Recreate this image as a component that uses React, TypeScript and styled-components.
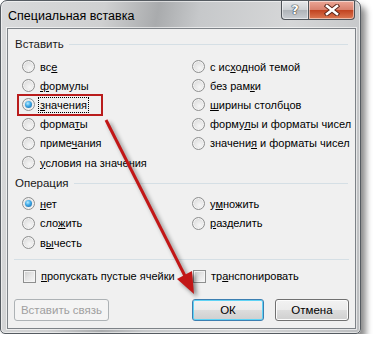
import styled, { createGlobalStyle } from 'styled-components';

const GlobalStyle = createGlobalStyle`
  html, body {
    margin: 0;
    padding: 0;
    background: #ffffff;
  }
  body {
    font-family: "Liberation Sans", Arial, sans-serif;
    font-size: 11px;
    color: #000;
  }
`;

type Option = { label: React.ReactNode; checked?: boolean; marked?: boolean };

const pasteLeft: Option[] = [
  { label: <>вс<u>е</u></> },
  { label: <><u>ф</u>ормулы</> },
  { label: <><u>з</u>начения</>, checked: true, marked: true },
  { label: <>форма<u>т</u>ы</> },
  { label: <>приме<u>ч</u>ания</> },
  { label: <><u>у</u>словия на значения</> },
];

const pasteRight: Option[] = [
  { label: <>с ис<u>х</u>одной темой</> },
  { label: <>без рам<u>к</u>и</> },
  { label: <><u>ш</u>ирины столбцов</> },
  { label: <>форму<u>л</u>ы и форматы чисел</> },
  { label: <>значени<u>я</u> и форматы чисел</> },
];

const opLeft: Option[] = [
  { label: <><u>н</u>ет</>, checked: true },
  { label: <>сло<u>ж</u>ить</> },
  { label: <>в<u>ы</u>честь</> },
];

const opRight: Option[] = [
  { label: <>у<u>м</u>ножить</> },
  { label: <><u>р</u>азделить</> },
];

const RadioColumn = ({ items, rowHeight }: { items: Option[]; rowHeight: number }) => (
  <Column>
    {items.map((item, i) => (
      <Item key={i} style={{ height: rowHeight }}>
        <Radio $checked={!!item.checked} />
        <Label $focused={!!item.marked}>{item.label}</Label>
        {item.marked && <Highlight />}
      </Item>
    ))}
  </Column>
);

const App = () => {
  return (
    <>
      <GlobalStyle />
      <Window>
        <TitleBar>
          <Title>Специальная вставка</Title>
          <Controls>
            <HelpButton>?</HelpButton>
            <CloseButton>
              <svg width="16" height="12" viewBox="0 0 16 12">
                <path
                  d="M3 2 L13 10 M13 2 L3 10"
                  stroke="#5a2418"
                  strokeWidth="4.4"
                  strokeLinecap="square"
                />
                <path
                  d="M3 2 L13 10 M13 2 L3 10"
                  stroke="#ffffff"
                  strokeWidth="2.6"
                  strokeLinecap="square"
                />
              </svg>
            </CloseButton>
          </Controls>
        </TitleBar>

        <Client>
          <GroupHeader>Вставить</GroupHeader>
          <OptionGrid $top={5}>
            <RadioColumn items={pasteLeft} rowHeight={19.2} />
            <RadioColumn items={pasteRight} rowHeight={19.2} />
          </OptionGrid>

          <GroupHeader $top={3}>Операция</GroupHeader>
          <OptionGrid $top={3}>
            <RadioColumn items={opLeft} rowHeight={19.5} />
            <RadioColumn items={opRight} rowHeight={19.5} />
          </OptionGrid>

          <Separator />

          <OptionGrid $top={7}>
            <Item style={{ height: 19 }}>
              <Checkbox />
              <CheckLabel><u>п</u>ропускать пустые ячейки</CheckLabel>
            </Item>
            <Item style={{ height: 19 }}>
              <Checkbox />
              <CheckLabel>тр<u>а</u>нспонировать</CheckLabel>
            </Item>
          </OptionGrid>

          <ButtonRow>
            <Button $disabled $width={95}>Вставить связь</Button>
            <Spacer />
            <Button $default $width={72}>ОК</Button>
            <Button $width={74}>Отмена</Button>
          </ButtonRow>
        </Client>

        <Arrow width="361" height="334" viewBox="0 0 361 334">
          <line x1="106" y1="120" x2="186" y2="278" stroke="#c21717" strokeWidth="3" />
          <polygon points="177,279 192,271 194,294" fill="#c21717" />
        </Arrow>
      </Window>
    </>
  );
};

export default App;

const Window = styled.div`
  position: relative;
  box-sizing: border-box;
  width: 361px;
  height: 334px;
  display: flex;
  flex-direction: column;
  padding: 0 4px 4px 6px;
  border: 1px solid #555b61;
  border-radius: 7px 7px 5px 5px;
  background: linear-gradient(
    100deg,
    #d9dadb 0%,
    #cfd0d1 25%,
    #a9abad 38%,
    #c6c8ca 48%,
    #d6d7d8 70%,
    #bcbec0 100%
  );
  box-shadow: 5px 6px 6px rgba(0, 0, 0, 0.45), inset 0 0 0 1px rgba(255, 255, 255, 0.55);
`;

const TitleBar = styled.div`
  display: flex;
  align-items: flex-start;
  height: 27px;
  flex-shrink: 0;
`;

const Title = styled.div`
  padding: 8px 0 0 1px;
  font-size: 12.5px;
  color: #000;
  white-space: nowrap;
`;

const Controls = styled.div`
  display: flex;
  margin-left: auto;
  margin-right: 1px;
`;

const CaptionButton = styled.div`
  height: 18px;
  display: flex;
  align-items: center;
  justify-content: center;
  border: 1px solid #4f545a;
  border-top: none;
  box-shadow: inset 0 0 0 1px rgba(255, 255, 255, 0.5);
`;

const HelpButton = styled(CaptionButton)`
  width: 26px;
  border-radius: 0 0 0 4px;
  border-right: none;
  background: linear-gradient(#e6e8ea 0%, #ccd0d4 50%, #aeb3b8 51%, #c9cdd2 100%);
  font-family: "DejaVu Sans", sans-serif;
  font-weight: bold;
  font-size: 13px;
  line-height: 18px;
  color: #ffffff;
  text-shadow: 0 0 1px #333, 0 0 1px #333, 0 0 1px #333;
`;

const CloseButton = styled(CaptionButton)`
  width: 45px;
  border-radius: 0 0 4px 0;
  background: linear-gradient(#eba696 0%, #d8806c 50%, #c1421f 51%, #dc7852 100%);
`;

const Client = styled.div`
  flex: 1;
  display: flex;
  flex-direction: column;
  padding: 0 7px;
  background: #f0f0f0;
  border: 1px solid #7d8287;
  box-shadow: 0 0 0 1px rgba(255, 255, 255, 0.6);
`;

const GroupHeader = styled.div<{ $top?: number }>`
  display: flex;
  align-items: center;
  height: 16px;
  margin-top: ${(p) => p.$top ?? 7}px;
  font-size: 11.5px;
  color: #1a1a1a;
  white-space: nowrap;

  &::after {
    content: '';
    flex: 1;
    height: 1px;
    margin-left: 5px;
    background: #d5dfe5;
  }
`;

const OptionGrid = styled.div<{ $top: number }>`
  display: grid;
  grid-template-columns: 170px 1fr;
  padding-left: 7px;
  margin-top: ${(p) => p.$top}px;
`;

const Column = styled.div`
  display: flex;
  flex-direction: column;
`;

const Item = styled.div`
  position: relative;
  display: flex;
  align-items: center;
  gap: 4px;
  white-space: nowrap;
`;

const Radio = styled.span<{ $checked: boolean }>`
  position: relative;
  box-sizing: border-box;
  width: 13px;
  height: 13px;
  flex-shrink: 0;
  border-radius: 50%;
  border: 1px solid #8e8f8f;
  background: radial-gradient(circle at 60% 65%, #f6f6f6 0%, #e3e3e3 55%, #d2d2d2 100%);
  box-shadow: inset 0 0 0 1px #f4f4f4;

  &::after {
    content: '';
    display: ${(p) => (p.$checked ? 'block' : 'none')};
    position: absolute;
    left: 2px;
    top: 2px;
    width: 7px;
    height: 7px;
    border-radius: 50%;
    background: radial-gradient(circle at 40% 35%, #b6ecff 0%, #3aa6e6 45%, #1b5d98 100%);
  }
`;

const Label = styled.span<{ $focused: boolean }>`
  padding: 0 1px;
  line-height: 14px;
  outline: ${(p) => (p.$focused ? '1px dotted #000' : 'none')};
`;

const Highlight = styled.span`
  position: absolute;
  left: -5px;
  top: -1px;
  width: 86px;
  height: 22px;
  box-sizing: border-box;
  border: 2px solid #b91c1c;
  pointer-events: none;
`;

const Separator = styled.div`
  height: 1px;
  margin: 6px -1px 0;
  background: #d5dfe5;
`;

const Checkbox = styled.span`
  box-sizing: border-box;
  width: 13px;
  height: 13px;
  flex-shrink: 0;
  margin-left: 1px;
  border: 1px solid #8e8f8f;
  background: linear-gradient(135deg, #cbcbcb 0%, #e6e6e6 50%, #f7f7f7 100%);
  box-shadow: inset 0 0 0 1px #f4f4f4;
`;

const CheckLabel = styled.span`
  margin-left: 1px;
`;

const ButtonRow = styled.div`
  display: flex;
  gap: 11px;
  margin: 13px -1px 0;
`;

const Spacer = styled.div`
  flex: 1;
`;

const Button = styled.div<{ $width: number; $default?: boolean; $disabled?: boolean }>`
  box-sizing: border-box;
  width: ${(p) => p.$width}px;
  height: 22px;
  display: flex;
  align-items: center;
  justify-content: center;
  border-radius: 3px;
  border: 1px solid ${(p) => (p.$disabled ? '#adb2b5' : p.$default ? '#3c7fb1' : '#707070')};
  background: ${(p) =>
    p.$disabled
      ? '#f4f4f4'
      : 'linear-gradient(#f2f2f2 0%, #ebebeb 50%, #dddddd 51%, #cfcfcf 100%)'};
  box-shadow: ${(p) =>
    p.$default ? 'inset 0 0 0 1px #5fd3f5' : p.$disabled ? 'none' : 'inset 0 0 0 1px #fcfcfc'};
  color: ${(p) => (p.$disabled ? '#a0a0a0' : '#000')};
  font-size: 11.5px;
  white-space: nowrap;
`;

const Arrow = styled.svg`
  position: absolute;
  left: -1px;
  top: -1px;
  pointer-events: none;
  filter: drop-shadow(3px 3px 2px rgba(0, 0, 0, 0.45));
`;
